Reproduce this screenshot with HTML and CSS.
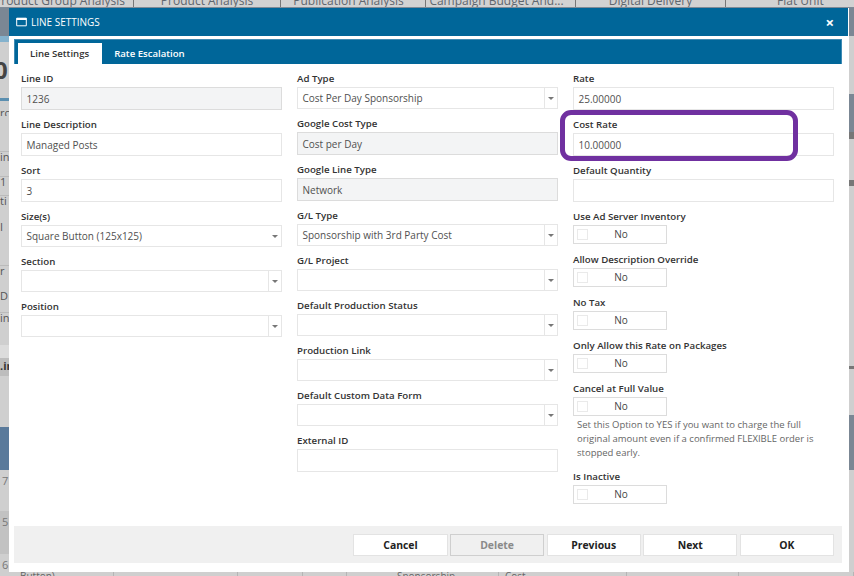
FILE: index.html
```html
<!DOCTYPE html>
<html lang="en">
<head>
<title>Line Settings</title>
<meta charset="UTF-8">
<link rel="stylesheet" href="styles.css">
</head>
<body>
  <div class="backdrop">
    <div class="bg-tabs">
      <span class="bg-tab t1">Product Group Analysis</span>
      <span class="bg-tab t2">Product Analysis</span>
      <span class="bg-tab t3">Publication Analysis</span>
      <span class="bg-tab t4">Campaign Budget And...</span>
      <span class="bg-tab t5">Digital Delivery</span>
      <span class="bg-tab t6">Flat Unit</span>
    </div>
    <div class="bg-mid">
      <div class="bg-left">
        <div class="frag h28 slate"></div>
        <div class="frag h6 sky"></div>
        <div class="frag h18"></div>
        <div class="frag h20 big">0</div>
        <div class="frag h18"></div>
        <div class="frag h3 blue"></div>
        <div class="frag h7"></div>
        <div class="frag h8">rc</div>
        <div class="frag h35"></div>
        <div class="frag h12 lined">in</div>
        <div class="frag h13"></div>
        <div class="frag h19 lined">1</div>
        <div class="frag h27 lined">ti</div>
        <div class="frag h43">I</div>
        <div class="frag h26 lined">r</div>
        <div class="frag h21">D</div>
        <div class="frag h33 lined">in</div>
        <div class="frag h13 pale"></div>
        <div class="frag h18 dark">.in</div>
        <div class="frag h51"></div>
        <div class="frag h43 steel"></div>
        <div class="frag h41 num">7</div>
        <div class="frag h43 num shade">5</div>
        <div class="frag h18 num">6</div>
      </div>
      <div class="bg-right">
        <div class="frag h28 slate"></div>
        <div class="frag h58"></div>
        <div class="frag h38 slate"></div>
        <div class="frag h7 mark"></div>
        <div class="frag h41"></div>
        <div class="frag h6 mark"></div>
        <div class="frag h180"></div>
        <div class="frag h3 mark"></div>
        <div class="frag h46"></div>
        <div class="frag h55 slate"></div>
      </div>
    </div>
    <div class="bg-bottom">
      <span class="b1">Button)</span>
      <span class="b2"></span>
      <span class="b3"></span>
      <span class="b4"></span>
      <span class="b5">Sponsorship</span>
      <span class="b6">Cost</span>
      <span class="b7"></span>
      <span class="b8"></span>
    </div>
  </div>

  <div class="modal">
    <div class="modal-head">
      <svg class="win-icon" width="11" height="10" viewBox="0 0 11 10"><path d="M0.7 1.2h9.6v7.6h-9.6z" fill="none" stroke="#fff" stroke-width="1"/><path d="M0.5 1h10v2h-10z" fill="#fff"/></svg>
      <span class="modal-title">LINE SETTINGS</span>
      <span class="close">×</span>
    </div>
    <div class="tabs">
      <span class="tab active">Line Settings</span>
      <span class="tab">Rate Escalation</span>
    </div>
    <div class="cols">
      <div class="col">
        <div class="field"><label>Line ID</label><div class="box ro">1236</div></div>
        <div class="field"><label>Line Description</label><div class="box">Managed Posts</div></div>
        <div class="field"><label>Sort</label><div class="box">3</div></div>
        <div class="field"><label>Size(s)</label><div class="box drop plain">Square Button (125x125)<i class="arrow"></i></div></div>
        <div class="field"><label>Section</label><div class="box drop"><i class="arrow"></i></div></div>
        <div class="field"><label>Position</label><div class="box drop"><i class="arrow"></i></div></div>
      </div>
      <div class="col">
        <div class="field"><label>Ad Type</label><div class="box drop">Cost Per Day Sponsorship<i class="arrow"></i></div></div>
        <div class="field"><label>Google Cost Type</label><div class="box ro">Cost per Day</div></div>
        <div class="field"><label>Google Line Type</label><div class="box ro">Network</div></div>
        <div class="field"><label>G/L Type</label><div class="box drop">Sponsorship with 3rd Party Cost<i class="arrow"></i></div></div>
        <div class="field"><label>G/L Project</label><div class="box drop"><i class="arrow"></i></div></div>
        <div class="field"><label>Default Production Status</label><div class="box drop"><i class="arrow"></i></div></div>
        <div class="field"><label>Production Link</label><div class="box drop"><i class="arrow"></i></div></div>
        <div class="field"><label>Default Custom Data Form</label><div class="box drop"><i class="arrow"></i></div></div>
        <div class="field"><label>External ID</label><div class="box"></div></div>
      </div>
      <div class="col">
        <div class="field"><label>Rate</label><div class="box">25.00000</div></div>
        <div class="field"><label>Cost Rate</label><div class="box">10.00000</div></div>
        <div class="field"><label>Default Quantity</label><div class="box"></div></div>
        <div class="sw-field"><label>Use Ad Server Inventory</label><div class="switch"><i class="check"></i><span>No</span></div></div>
        <div class="sw-field"><label>Allow Description Override</label><div class="switch"><i class="check"></i><span>No</span></div></div>
        <div class="sw-field"><label>No Tax</label><div class="switch"><i class="check"></i><span>No</span></div></div>
        <div class="sw-field"><label>Only Allow this Rate on Packages</label><div class="switch"><i class="check"></i><span>No</span></div></div>
        <div class="sw-field"><label>Cancel at Full Value</label><div class="switch"><i class="check"></i><span>No</span></div></div>
        <p class="hint">Set this Option to YES if you want to charge the full original amount even if a confirmed FLEXIBLE order is stopped early.</p>
        <div class="sw-field"><label>Is Inactive</label><div class="switch"><i class="check"></i><span>No</span></div></div>
      </div>
    </div>
    <div class="foot">
      <button class="btn">Cancel</button>
      <button class="btn off">Delete</button>
      <button class="btn">Previous</button>
      <button class="btn">Next</button>
      <button class="btn">OK</button>
    </div>
    <div class="highlight"></div>
  </div>
</body>
</html>
```

FILE: styles.css
```css
html, body {
    margin: 0;
    height: 100%;
    overflow: hidden;
}
body {
    position: relative;
    font-family: "Open Sans", "Noto Sans", sans-serif;
    font-size: 10px;
    color: #505050;
    background-color: #cfcfcf;
}

/* page behind the dialog */
.backdrop {
    position: absolute;
    inset: 0;
    display: flex;
    flex-direction: column;
    background-color: #cfcfcf;
}
.bg-tabs {
    display: flex;
    flex: none;
    box-sizing: border-box;
    height: 8px;
    overflow: hidden;
    font-size: 12px;
    color: #5f666e;
    background-color: #d2d2d2;
    border-bottom: 1px solid #7f8a96;
}
.bg-tab {
    flex: none;
    box-sizing: border-box;
    border-right: 1px solid #777;
    text-align: center;
    white-space: nowrap;
    overflow: hidden;
    line-height: 2px;
}
.t1 { width: 140px; margin-left: -6px; text-align: right; padding-right: 8px; }
.t2 { width: 147px; }
.t3 { width: 145px; padding-right: 9px; }
.t4 { width: 150px; padding-right: 8px; }
.t5 { width: 150px; }
.t6 { width: 128px; border-right: none; padding-left: 51px; text-align: left; }
.bg-mid {
    display: flex;
    flex: 1;
    justify-content: space-between;
    min-height: 0;
}
.bg-left, .bg-right {
    width: 9px;
    overflow: hidden;
}
.bg-right {
    width: 5px;
}
.frag {
    font-size: 11px;
    line-height: 10px;
    white-space: nowrap;
    color: #555;
    box-sizing: border-box;
    overflow: hidden;
}
.h3 { height: 3px; }
.h6 { height: 6px; }
.h7 { height: 7px; }
.h8 { height: 8px; }
.h12 { height: 12px; }
.h13 { height: 13px; }
.h18 { height: 18px; }
.h19 { height: 19px; }
.h20 { height: 20px; }
.h21 { height: 21px; }
.h26 { height: 26px; }
.h27 { height: 27px; }
.h28 { height: 28px; }
.h33 { height: 33px; }
.h35 { height: 35px; }
.h38 { height: 38px; }
.h41 { height: 41px; }
.h43 { height: 43px; }
.h46 { height: 46px; }
.h51 { height: 51px; }
.h55 { height: 55px; }
.h58 { height: 58px; }
.h180 { height: 180px; }
.slate { background-color: #7b8794; }
.sky { background-color: #84b2cd; }
.blue { background-color: #5b8fb0; }
.steel { background-color: #5a7a9b; }
.mark { background-color: #777; }
.pale { background-color: #dcdcdc; }
.shade { background-color: #c2c2c2; }
.dark { background-color: #bdbdbd; color: #333; font-weight: 700; line-height: 16px; }
.lined { border-top: 1px solid #bbb; }
.big {
    font-size: 24px;
    line-height: 20px;
    font-weight: 700;
    margin-left: -6px;
    color: #444;
}
.num {
    color: #777;
    padding-left: 2px;
    padding-top: 6px;
}
.bg-bottom {
    display: flex;
    flex: none;
    height: 4px;
    overflow: hidden;
    font-size: 10px;
    line-height: 8px;
    color: #666;
    background-color: #cfcfcf;
}
.bg-bottom span {
    flex: none;
    box-sizing: border-box;
    padding-left: 6px;
    border-right: 1px solid #b5b5b5;
    white-space: nowrap;
}
.bg-bottom .b1 { width: 114px; padding-left: 20px; }
.b2 { width: 124px; }
.b3 { width: 65px; }
.b4 { width: 44px; }
.bg-bottom .b5 { width: 152px; padding-left: 50px; }
.b6 { width: 128px; }
.b7 { width: 112px; }
.b8 { width: 115px; }

/* dialog */
.modal {
    position: absolute;
    left: 9px;
    top: 8px;
    width: 840px;
    height: 564px;
    display: flex;
    flex-direction: column;
    background-color: #fff;
}
.modal-head {
    display: flex;
    align-items: center;
    height: 28px;
    flex: none;
    margin-right: 1px;
    padding: 0 14px 0 7px;
    color: #fff;
    background-color: #006699;
}
.win-icon {
    margin-right: 4px;
}
.modal-title {
    font-size: 10px;
}
.close {
    margin-left: auto;
    font-size: 15px;
    font-weight: bold;
}
.tabs {
    display: flex;
    flex: none;
    box-sizing: border-box;
    height: 25px;
    margin: 3px 7px 0 5px;
    padding-left: 3px;
    border: 1px solid #3d8ab4;
    border-bottom: none;
    background-color: #006699;
}
.tab {
    padding: 0 12px;
    line-height: 28px;
    font-weight: 600;
    font-size: 9.6px;
    color: #fff;
}
.tab.active {
    color: #333;
    background-color: #fff;
    margin-top: 3px;
    padding-right: 13px;
    line-height: 21px;
}
.cols {
    flex: 1;
    display: flex;
    gap: 15px;
    padding: 7px 15px 0 12px;
}
.col {
    flex: 1;
    min-width: 0;
}
.field {
    margin-bottom: 7px;
}
label {
    display: block;
    box-sizing: border-box;
    height: 14px;
    padding-top: 1px;
    font-weight: 600;
    font-size: 9.7px;
    line-height: 13px;
    color: #333;
}
.box {
    position: relative;
    box-sizing: border-box;
    height: 23px;
    margin-top: 2px;
    padding: 1px 4.5px 0;
    line-height: 21px;
    border: 1px solid #e6e6e6;
    white-space: nowrap;
}
.box.drop {
    height: 22px;
    padding-top: 0;
    line-height: 20px;
}
.box.ro {
    background-color: #f3f4f5;
    border-color: #dcdcdc;
}
.arrow {
    position: absolute;
    right: 0;
    top: 0;
    bottom: 0;
    width: 12px;
    border-left: 1px solid #e6e6e6;
}
.arrow::after {
    content: "";
    position: absolute;
    left: 3px;
    top: 9px;
    border-left: 3px solid transparent;
    border-right: 3px solid transparent;
    border-top: 3px solid #777;
}
.box.plain .arrow {
    border-left: none;
}
.sw-field {
    height: 43px;
}
.switch {
    position: relative;
    box-sizing: border-box;
    width: 94px;
    height: 19px;
    margin-top: 2px;
    border: 1px solid #dcdcdc;
    line-height: 17px;
    text-align: center;
    color: #444;
}
.switch span {
    margin-left: 2px;
}
.check {
    position: absolute;
    left: 3px;
    top: 3px;
    width: 9px;
    height: 9px;
    border: 1px solid #eaeaea;
}
.hint {
    margin: -6px 0 9px;
    padding-left: 4px;
    font-size: 9.5px;
    line-height: 14px;
    color: #666;
}
.foot {
    display: flex;
    flex: none;
    justify-content: flex-end;
    gap: 2.3px;
    box-sizing: border-box;
    height: 37px;
    margin: 0 7px 9px 5px;
    padding: 8px 8px 0 0;
    background-color: #f0f0f0;
}
.btn {
    width: 94.3px;
    height: 22px;
    padding: 0;
    font-family: inherit;
    font-size: 10.4px;
    font-weight: 700;
    color: #222;
    background-color: #fff;
    border: 1px solid #e3e3e3;
}
.btn.off {
    color: #8a8a8a;
    background-color: #f0f0f0;
    border-color: #cfcfcf;
}
.highlight {
    position: absolute;
    left: 551px;
    top: 102px;
    box-sizing: border-box;
    width: 238px;
    height: 51px;
    border: 5px solid #7030a0;
    border-radius: 11px;
}
```
